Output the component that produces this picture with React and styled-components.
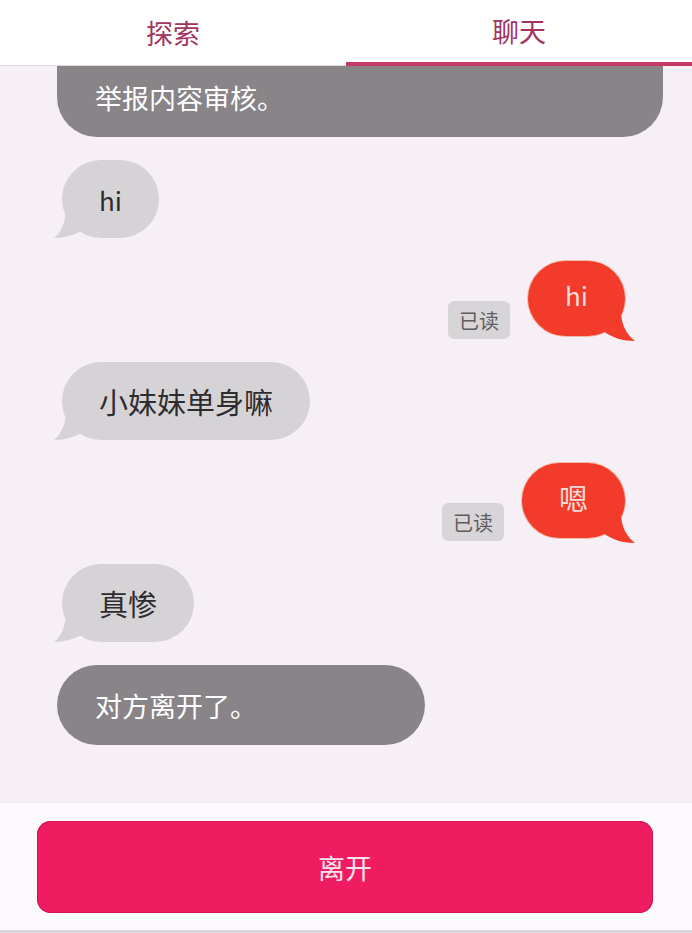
import React from 'react';
import styled, { createGlobalStyle } from 'styled-components';

const GlobalStyle = createGlobalStyle`
  html, body {
    margin: 0;
    padding: 0;
    background: #f6eff6;
  }
  body {
    font-family: "Noto Sans CJK SC", "Noto Sans", sans-serif;
  }
`;

const Screen = styled.div`
  width: 692px;
  height: 933px;
  display: flex;
  flex-direction: column;
  overflow: hidden;
  background: #f6eff6;
`;

const TabBar = styled.div`
  position: relative;
  z-index: 2;
  display: grid;
  grid-template-columns: 1fr 1fr;
  height: 66px;
  background: #ffffff;
  flex-shrink: 0;
`;

const Tab = styled.div`
  display: flex;
  align-items: center;
  justify-content: center;
  font-size: 27px;
  color: #a3335f;
  padding-bottom: ${p => (p.$active ? '2px' : '0')};
  border-bottom: ${p => (p.$active ? '4px solid #c43a64' : '1px solid #dedbde')};
  box-sizing: border-box;
`;

const Messages = styled.div`
  flex: 1;
  display: flex;
  flex-direction: column;
  gap: 23px;
  background: #f6eff6;
`;

const Row = styled.div`
  display: flex;
  align-items: flex-end;
  justify-content: ${p => (p.$out ? 'flex-end' : 'flex-start')};
  gap: 18px;
  padding: ${p => (p.$out ? '0 67px 0 0' : '0 0 0 62px')};
`;

const Notice = styled.div`
  display: flex;
  align-items: center;
  height: ${p => 80 + (p.$hidden || 0)}px;
  margin-left: 57px;
  margin-top: ${p => (p.$hidden ? -(p.$hidden + 9) : 0)}px;
  padding-top: ${p => p.$hidden || 0}px;
  width: ${p => p.$w}px;
  box-sizing: border-box;
  padding-left: 38px;
  border-radius: 40px;
  background: #888488;
  color: #ffffff;
  font-size: 27px;
`;

const Bubble = styled.div`
  position: relative;
  display: flex;
  align-items: center;
  justify-content: center;
  height: ${p => (p.$out ? 75 : 78)}px;
  padding: 0 37px;
  border-radius: 39px;
  background: ${p => (p.$out ? '#f23b2a' : '#d6d3d7')};
  color: ${p => (p.$out ? '#f6dcd8' : '#2e2c2e')};
  font-size: ${p => (p.$latin ? 26 : 29)}px;
  box-shadow: ${p => (p.$out ? '0 0 0 1px #f0b9a8' : 'none')};
  margin-bottom: ${p => (p.$out ? 3 : 0)}px;
`;

const BubbleText = styled.span`
  position: relative;
  z-index: 1;
  margin-top: ${p => (p.$raise ? -8 : 0)}px;
`;

const Tail = styled.svg`
  position: absolute;
  bottom: ${p => (p.$out ? -5 : 0)}px;
  ${p => (p.$out ? 'right: -10px;' : 'left: -8px;')}
  width: 34px;
  height: 30px;
`;

const ReadTag = styled.div`
  display: flex;
  align-items: center;
  justify-content: center;
  width: 62px;
  height: 38px;
  border-radius: 6px;
  background: #d8d5d8;
  color: #5f5c5f;
  font-size: 20px;
`;

const Footer = styled.div`
  flex-shrink: 0;
  height: 131px;
  box-sizing: border-box;
  padding: 18px 39px 0 37px;
  background: #fcfafc;
  border-top: 1px solid #ece8ec;
  border-bottom: 3px solid #d9d7d9;
`;

const LeaveButton = styled.div`
  display: flex;
  align-items: center;
  justify-content: center;
  height: 92px;
  border-radius: 14px;
  background: #ef1c62;
  box-shadow: inset 0 0 0 1px #d2144f;
  color: #f8e4ec;
  font-size: 27px;
`;

function IncomingTail() {
  return (
    <Tail viewBox="0 0 34 30">
      <path d="M12 0 C12 12 8 24 0 30 C10 30 20 27 30 22 L30 0 Z" fill="#d6d3d7" />
    </Tail>
  );
}

function OutgoingTail() {
  return (
    <Tail $out viewBox="0 0 34 30">
      <path d="M20 0 C20 14 26 24 34 30 C22 30 12 27 2 20 L4 0 Z" fill="#f23b2a" />
    </Tail>
  );
}

function Incoming({ children, latin }) {
  return (
    <Row>
      <Bubble $latin={latin}>
        <IncomingTail />
        <BubbleText>{children}</BubbleText>
      </Bubble>
    </Row>
  );
}

function Outgoing({ children, latin }) {
  return (
    <Row $out>
      <ReadTag>已读</ReadTag>
      <Bubble $out $latin={latin}>
        <OutgoingTail />
        <BubbleText $raise>{children}</BubbleText>
      </Bubble>
    </Row>
  );
}

export default function App() {
  return (
    <>
      <GlobalStyle />
      <Screen>
        <TabBar>
          <Tab>探索</Tab>
          <Tab $active>聊天</Tab>
        </TabBar>
        <Messages>
          <Notice $hidden={40} $w={606}>举报内容审核。</Notice>
          <Incoming latin>hi</Incoming>
          <Outgoing latin>hi</Outgoing>
          <Incoming>小妹妹单身嘛</Incoming>
          <Outgoing>嗯</Outgoing>
          <Incoming>真惨</Incoming>
          <Notice $w={368}>对方离开了。</Notice>
        </Messages>
        <Footer>
          <LeaveButton>离开</LeaveButton>
        </Footer>
      </Screen>
    </>
  );
}
